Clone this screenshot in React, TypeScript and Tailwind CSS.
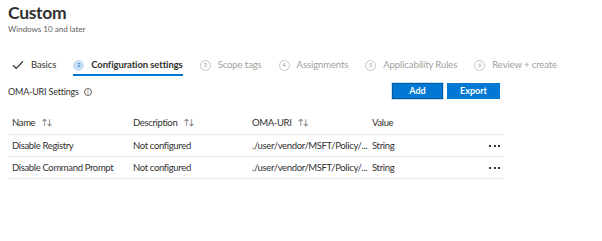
import React from "react";

const font = { fontFamily: 'Lato, "Open Sans", sans-serif' };

function Step({ n, label, active }: { n: string; label: string; active?: boolean }) {
  return (
    <div className="relative flex items-center h-[22px] whitespace-nowrap">
      <span
        className={`flex items-center justify-center w-[11px] h-[11px] rounded-full text-[6px] leading-none mr-[7px] ${
          active ? "bg-[#c7e0f4] text-[#0078d4] border border-[#c7e0f4]" : "border border-[#c8c6c4] text-[#a19f9d]"
        }`}
      >
        {n}
      </span>
      <span className={`text-[9.5px] tracking-[-0.1px] ${active ? "text-[#323130] font-bold" : "text-[#a19f9d]"}`}>{label}</span>
      {active && <div className="absolute left-0 right-0 bottom-[0px] h-[2px] bg-[#0078d4]" />}
    </div>
  );
}

function Arrows() {
  return <span className="ml-[6px] text-[8px] text-[#605e5c] tracking-[-1px] relative top-[-2px]">↑↓</span>;
}

function Dots() {
  return (
    <div className="flex gap-[2.5px] items-center justify-end pr-[4px]">
      <span className="w-[2px] h-[2px] bg-[#323130]" />
      <span className="w-[2px] h-[2px] bg-[#323130]" />
      <span className="w-[2px] h-[2px] bg-[#323130]" />
    </div>
  );
}

export default function App() {
  const rows = [
    ["Disable Registry", "Not configured", "./user/vendor/MSFT/Policy/...", "String"],
    ["Disable Command Prompt", "Not configured", "./user/vendor/MSFT/Policy/...", "String"],
  ];
  return (
    <div className="w-[602px] h-[241px] bg-white overflow-hidden text-[#323130] whitespace-nowrap" style={font}>
      <div className="pl-[8px] pt-[1px] w-[504px]">
        <div className="text-[17.5px] font-bold leading-[24px] tracking-[-0.3px]">Custom</div>
        <div className="text-[8px] text-[#605e5c] leading-[12px] mt-[-2px]">Windows 10 and later</div>

        <div className="flex items-center mt-[19px] pl-[4px] gap-[17px]">
          <div className="flex items-center h-[22px]">
            <svg width="12" height="10" viewBox="0 0 12 10" className="mr-[7px]">
              <path d="M1 5.2 L4.2 8.4 L11 1.4" fill="none" stroke="#323130" strokeWidth="1.3" />
            </svg>
            <span className="text-[9.5px] tracking-[-0.1px] text-[#323130]">Basics</span>
          </div>
          <Step n="2" label="Configuration settings" active />
          <Step n="3" label="Scope tags" />
          <Step n="4" label="Assignments" />
          <Step n="5" label="Applicability Rules" />
          <Step n="6" label="Review + create" />
        </div>

        <div className="flex items-center justify-between mt-[7px]">
          <div className="flex items-center text-[9px] tracking-[-0.2px] text-[#323130] mt-[2px]">
            OMA-URI Settings
            <span className="ml-[5px] w-[8px] h-[8px] rounded-full border border-[#605e5c] flex items-center justify-center text-[5px] leading-none">i</span>
          </div>
          <div className="flex gap-[4px] mr-[4px]">
            <button className="w-[51px] h-[16px] bg-[#0078d4] text-white text-[9px] font-bold border border-[#005a9e] outline outline-1 outline-[#c7e0f4] flex items-center justify-center">Add</button>
            <button className="w-[53px] h-[16px] bg-[#0078d4] text-white text-[9px] font-bold flex items-center justify-center">Export</button>
          </div>
        </div>

        <div className="mt-[14px] text-[9.5px] tracking-[-0.35px]">
          <div className="grid grid-cols-[121px_119px_120px_1fr_24px] items-center h-[22px] pl-[4px] border-b border-[#edebe9]">
            <div className="flex items-center">Name<Arrows /></div>
            <div className="flex items-center">Description<Arrows /></div>
            <div className="flex items-center">OMA-URI<Arrows /></div>
            <div>Value</div>
            <div />
          </div>
          {rows.map((r, i) => (
            <div key={i} className="grid grid-cols-[121px_119px_120px_1fr_24px] items-center h-[22px] pl-[4px] pt-[1px] border-b border-[#edebe9] text-[#323130]">
              <div className="overflow-hidden">{r[0]}</div>
              <div className="overflow-hidden">{r[1]}</div>
              <div className="overflow-hidden">{r[2]}</div>
              <div>{r[3]}</div>
              <Dots />
            </div>
          ))}
        </div>
      </div>
    </div>
  );
}
